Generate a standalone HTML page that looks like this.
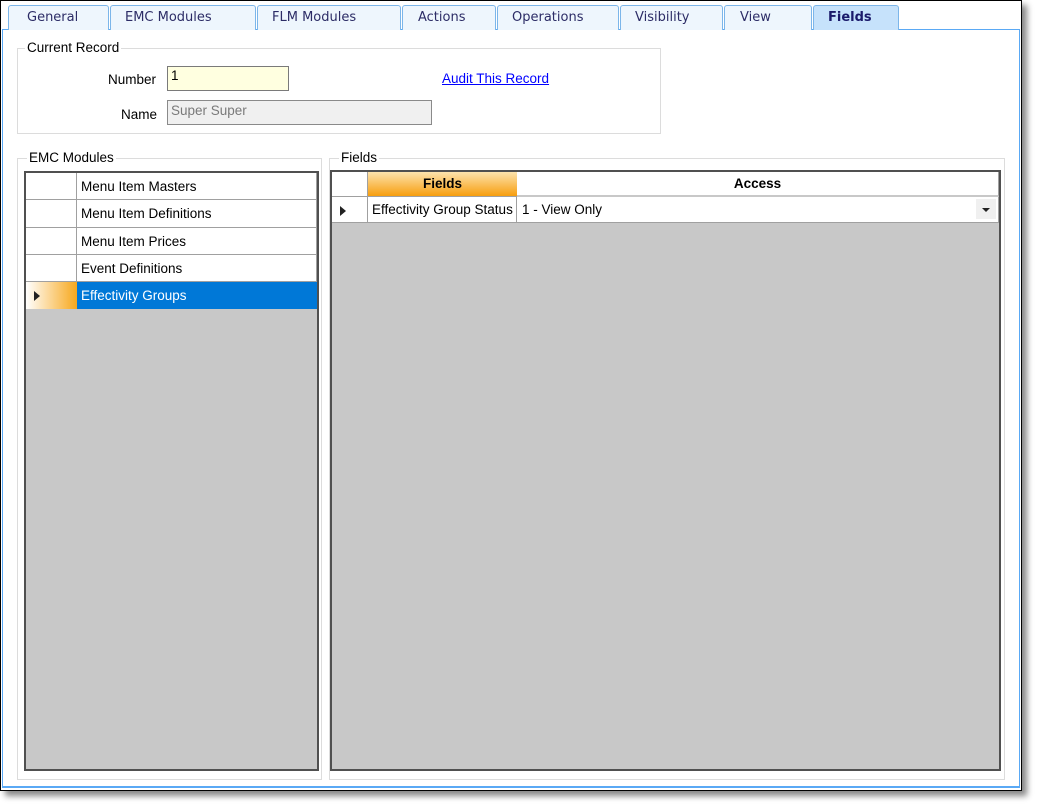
<!DOCTYPE html>
<html><head><style>
*{box-sizing:border-box;margin:0;padding:0}
body{width:1038px;height:806px;background:#fff;position:relative;overflow:hidden;font-family:"Liberation Sans",Arial,sans-serif;font-size:13.5px;color:#000}
.a{position:absolute}
.frame{left:0;top:0;width:1022px;height:791px;border:1px solid #000;box-shadow:5px 5px 6px #888;background:#fff}
.panel{left:2px;top:29px;width:1018px;height:759px;border:1px solid #5aa9f5;border-bottom-width:2px}
.tab{top:5px;height:25px;background:#eef6fd;border:1px solid #7cb6ea;border-bottom:none;border-radius:3px 3px 0 0;font-family:"DejaVu Sans",Verdana,sans-serif;font-size:13px;color:#2c2c66;padding-top:4px}
.tab.act{background:#c6e2fb;font-weight:bold;color:#1b1b6b;height:25px}
.gb{border:1px solid #dcdcdc}
.gl{background:#fff;padding:0 2px;font-size:13.5px;color:#000}
.grid{border:2px solid #505050;background:#c8c8c8}
.cell{background:#fff;border-right:1px solid #a0a0a0;border-bottom:1px solid #a0a0a0}
</style></head><body>
<div class="a frame"></div>
<div class="a panel"></div>
<div class="a tab" style="left:8px;width:101px;padding-left:18px">General</div>
<div class="a tab" style="left:110px;width:146px;padding-left:14px">EMC Modules</div>
<div class="a tab" style="left:257px;width:144px;padding-left:14px">FLM Modules</div>
<div class="a tab" style="left:402px;width:94px;padding-left:15px">Actions</div>
<div class="a tab" style="left:497px;width:122px;padding-left:14px">Operations</div>
<div class="a tab" style="left:620px;width:103px;padding-left:14px">Visibility</div>
<div class="a tab" style="left:724px;width:88px;padding-left:15px">View</div>
<div class="a tab act" style="left:813px;width:86px;padding-left:14px">Fields</div>

<div class="a gb" style="left:17px;top:48px;width:644px;height:86px"></div>
<div class="a gl" style="left:25px;top:40px">Current Record</div>
<div class="a" style="left:108px;top:72px">Number</div>
<div class="a" style="left:167px;top:66px;width:122px;height:25px;background:#ffffe0;border:1px solid #7a7a7a;padding:1px 3px">1</div>
<div class="a" style="left:121px;top:107px">Name</div>
<div class="a" style="left:167px;top:100px;width:265px;height:25px;background:#f0f0f0;border:1px solid #8a8a8a;padding:2px 3px;color:#7a7a7a">Super Super</div>
<div class="a" style="left:442px;top:71px;color:#0000ff;text-decoration:underline">Audit This Record</div>

<div class="a gb" style="left:17px;top:158px;width:305px;height:622px"></div>
<div class="a gl" style="left:27px;top:150px">EMC Modules</div>
<div class="a grid" style="left:24px;top:171px;width:295px;height:600px"></div>
<div class="a" style="left:26px;top:173px;width:291px">
 <div style="display:flex;height:27px"><div class="cell" style="width:51px"></div><div class="cell" style="flex:1;padding:6px 4px">Menu Item Masters</div></div>
 <div style="display:flex;height:28px"><div class="cell" style="width:51px"></div><div class="cell" style="flex:1;padding:6px 4px">Menu Item Definitions</div></div>
 <div style="display:flex;height:27px"><div class="cell" style="width:51px"></div><div class="cell" style="flex:1;padding:6px 4px">Menu Item Prices</div></div>
 <div style="display:flex;height:27px"><div class="cell" style="width:51px"></div><div class="cell" style="flex:1;padding:6px 4px">Event Definitions</div></div>
 <div style="display:flex;height:27px"><div style="width:51px;background:linear-gradient(90deg,#fff,#f7a81d);position:relative"><span class="a" style="left:8px;top:9px;border-left:6px solid #222;border-top:5px solid transparent;border-bottom:5px solid transparent"></span></div><div style="flex:1;padding:6px 4px;background:#0078d7;color:#fff">Effectivity Groups</div></div>
</div>

<div class="a gb" style="left:329px;top:158px;width:676px;height:622px"></div>
<div class="a gl" style="left:339px;top:150px">Fields</div>
<div class="a grid" style="left:330px;top:170px;width:671px;height:601px"></div>
<div class="a" style="left:332px;top:172px;width:667px">
 <div style="display:flex;height:25px"><div class="cell" style="width:36px"></div><div style="width:149px;background:linear-gradient(#fde3ad,#f79e0e);font-weight:bold;text-align:center;padding-top:4px;border-bottom:1px solid #a0a0a0">Fields</div><div class="cell" style="flex:1;font-weight:bold;text-align:center;padding-top:4px;border-bottom:2px solid #c8c8c8">Access</div></div>
 <div style="display:flex;height:26px"><div class="cell" style="width:36px;position:relative"><span class="a" style="left:8px;top:9px;border-left:6px solid #222;border-top:5px solid transparent;border-bottom:5px solid transparent"></span></div><div class="cell" style="width:149px;padding:5px 4px;white-space:nowrap;overflow:hidden">Effectivity Group Status</div><div class="cell" style="flex:1;padding:5px 5px;position:relative">1 - View Only<span class="a" style="right:2px;top:2px;width:20px;height:20px;background:#f0f0f0"></span><span class="a" style="right:8px;top:11px;border-top:4px solid #222;border-left:4px solid transparent;border-right:4px solid transparent"></span></div></div>
</div>
</body></html>
